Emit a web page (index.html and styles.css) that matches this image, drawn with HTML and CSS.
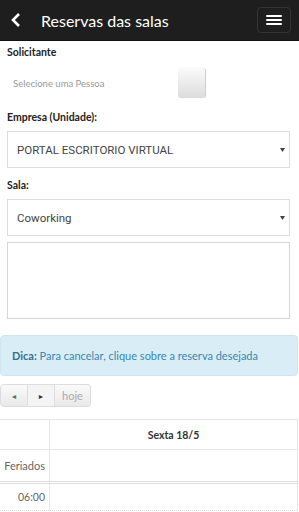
FILE: index.html
```html
<!DOCTYPE html>
<html lang="pt-BR">
<head>
    <meta charset="UTF-8">
    <meta name="viewport" content="width=device-width, initial-scale=1.0">
    <title>Reservas das salas</title>
    <link rel="stylesheet" href="styles.css">
</head>
<body>

    <div class="topbar">
        <span class="back">
            <svg width="12" height="16" viewBox="0 0 12 16"><path d="M9 2 L3 8 L9 14" fill="none" stroke="#fff" stroke-width="2.6"/></svg>
        </span>
        <span class="title">Reservas das salas</span>
        <span class="menu-btn">
            <span class="bar"></span>
            <span class="bar"></span>
            <span class="bar"></span>
        </span>
    </div>

    <div class="form">
        <label class="lbl">Solicitante</label>
        <div class="pessoa">
            <span class="placeholder">Selecione uma Pessoa</span>
            <span class="pick-btn"></span>
        </div>

        <label class="lbl">Empresa (Unidade):</label>
        <div class="select">
            <span>PORTAL ESCRITORIO VIRTUAL</span>
            <svg class="caret" width="5" height="4" viewBox="0 0 5 4"><path d="M0 0 H5 L2.5 4 Z" fill="#444"/></svg>
        </div>

        <label class="lbl">Sala:</label>
        <div class="select">
            <span>Coworking</span>
            <svg class="caret" width="5" height="4" viewBox="0 0 5 4"><path d="M0 0 H5 L2.5 4 Z" fill="#444"/></svg>
        </div>

        <div class="textarea"></div>
    </div>

    <div class="dica"><strong>Dica:</strong> Para cancelar, clique sobre a reserva desejada</div>

    <div class="btn-group">
        <span class="btn">&#9668;</span>
        <span class="btn active">&#9658;</span>
        <span class="btn today">hoje</span>
    </div>

    <table class="agenda">
        <tr class="head">
            <td class="axis"></td>
            <td class="day">Sexta 18/5</td>
        </tr>
        <tr class="allday">
            <td class="axis">Feriados</td>
            <td></td>
        </tr>
        <tr class="slot">
            <td class="axis">06:00</td>
            <td></td>
        </tr>
    </table>

</body>
</html>
```

FILE: styles.css
```css
body {
    margin: 0;
    font-family: Lato, "Open Sans", sans-serif;
    color: #333;
    background: #fff;
    width: 299px;
    overflow: hidden;
}
.topbar {
    height: 40px;
    background-color: #1e1e1e;
    border-bottom: 1px solid #111;
    display: flex;
    align-items: center;
    padding: 0 8px 0 10px;
}
.back {
    display: flex;
    width: 31px;
}
.title {
    flex: 1;
    color: #fff;
    font-size: 16px;
}
.menu-btn {
    width: 32px;
    height: 24px;
    border: 1px solid #333;
    border-radius: 4px;
    display: flex;
    flex-direction: column;
    align-items: center;
    justify-content: center;
    gap: 2px;
}
.bar {
    width: 16px;
    height: 2px;
    background: #fff;
    border-radius: 1px;
}
.form {
    padding: 0 9px 0 7px;
}
.lbl {
    display: block;
    font-size: 10.5px;
    font-weight: bold;
    color: #222;
    padding-top: 5px;
    height: 20px;
}
.pessoa {
    display: flex;
    align-items: center;
    height: 34px;
    margin-bottom: 6px;
}
.placeholder {
    font-size: 9.5px;
    color: #999;
    padding-left: 6px;
    width: 165px;
}
.pick-btn {
    width: 27px;
    height: 30px;
    border-radius: 3px;
    background: linear-gradient(#fafafa, #dcdcdc);
    box-shadow: 1px 0 1px #ccc;
}
.select {
    height: 35px;
    border: 1px solid #ddd;
    display: flex;
    align-items: center;
    justify-content: space-between;
    padding: 0 4px 0 9px;
    font-family: Roboto, sans-serif;
    font-size: 11.5px;
    color: #444;
    margin-bottom: 6px;
}
.textarea {
    height: 75px;
    border: 1px solid #d6d6d6;
    margin-top: 1px;
}
.dica {
    margin: 16px 1px 0 0;
    background-color: #d9edf7;
    border: 1px solid #cde6f2;
    border-radius: 4px;
    padding: 12px 11px;
    font-size: 11px;
    line-height: 15px;
    color: #3a87ad;
}
.dica strong {
    color: #31708f;
}
.btn-group {
    display: flex;
    margin-top: 8px;
    height: 23px;
}
.btn {
    display: flex;
    align-items: center;
    justify-content: center;
    width: 26px;
    border: 1px solid #ddd;
    border-left: none;
    background: linear-gradient(#fafafa, #e9e9e9);
    font-size: 7px;
    color: #333;
}
.btn:first-child {
    border-left: 1px solid #ddd;
    border-radius: 4px 0 0 4px;
    color: #666;
}
.btn.active {
    background: #f4f4f4;
}
.btn.today {
    width: 35px;
    font-size: 11px;
    color: #aaa;
    border-radius: 0 4px 4px 0;
}
.agenda {
    margin-top: 12px;
    width: 298px;
    border-collapse: collapse;
    font-size: 10.5px;
}
.agenda td {
    border: 1px solid #e6e6e6;
    padding: 0;
}
.axis {
    width: 45px;
    text-align: right;
    padding-right: 4px !important;
    color: #666;
    border-left: none !important;
}
.head td {
    height: 29px;
}
.day {
    text-align: center;
    font-weight: bold;
    color: #333;
}
.allday td {
    height: 31px;
    border-bottom: 3px double #ddd;
}
.allday .axis {
    font-size: 11px;
}
.slot td {
    height: 26px;
    border-bottom: 1px dotted #ddd;
}
```
